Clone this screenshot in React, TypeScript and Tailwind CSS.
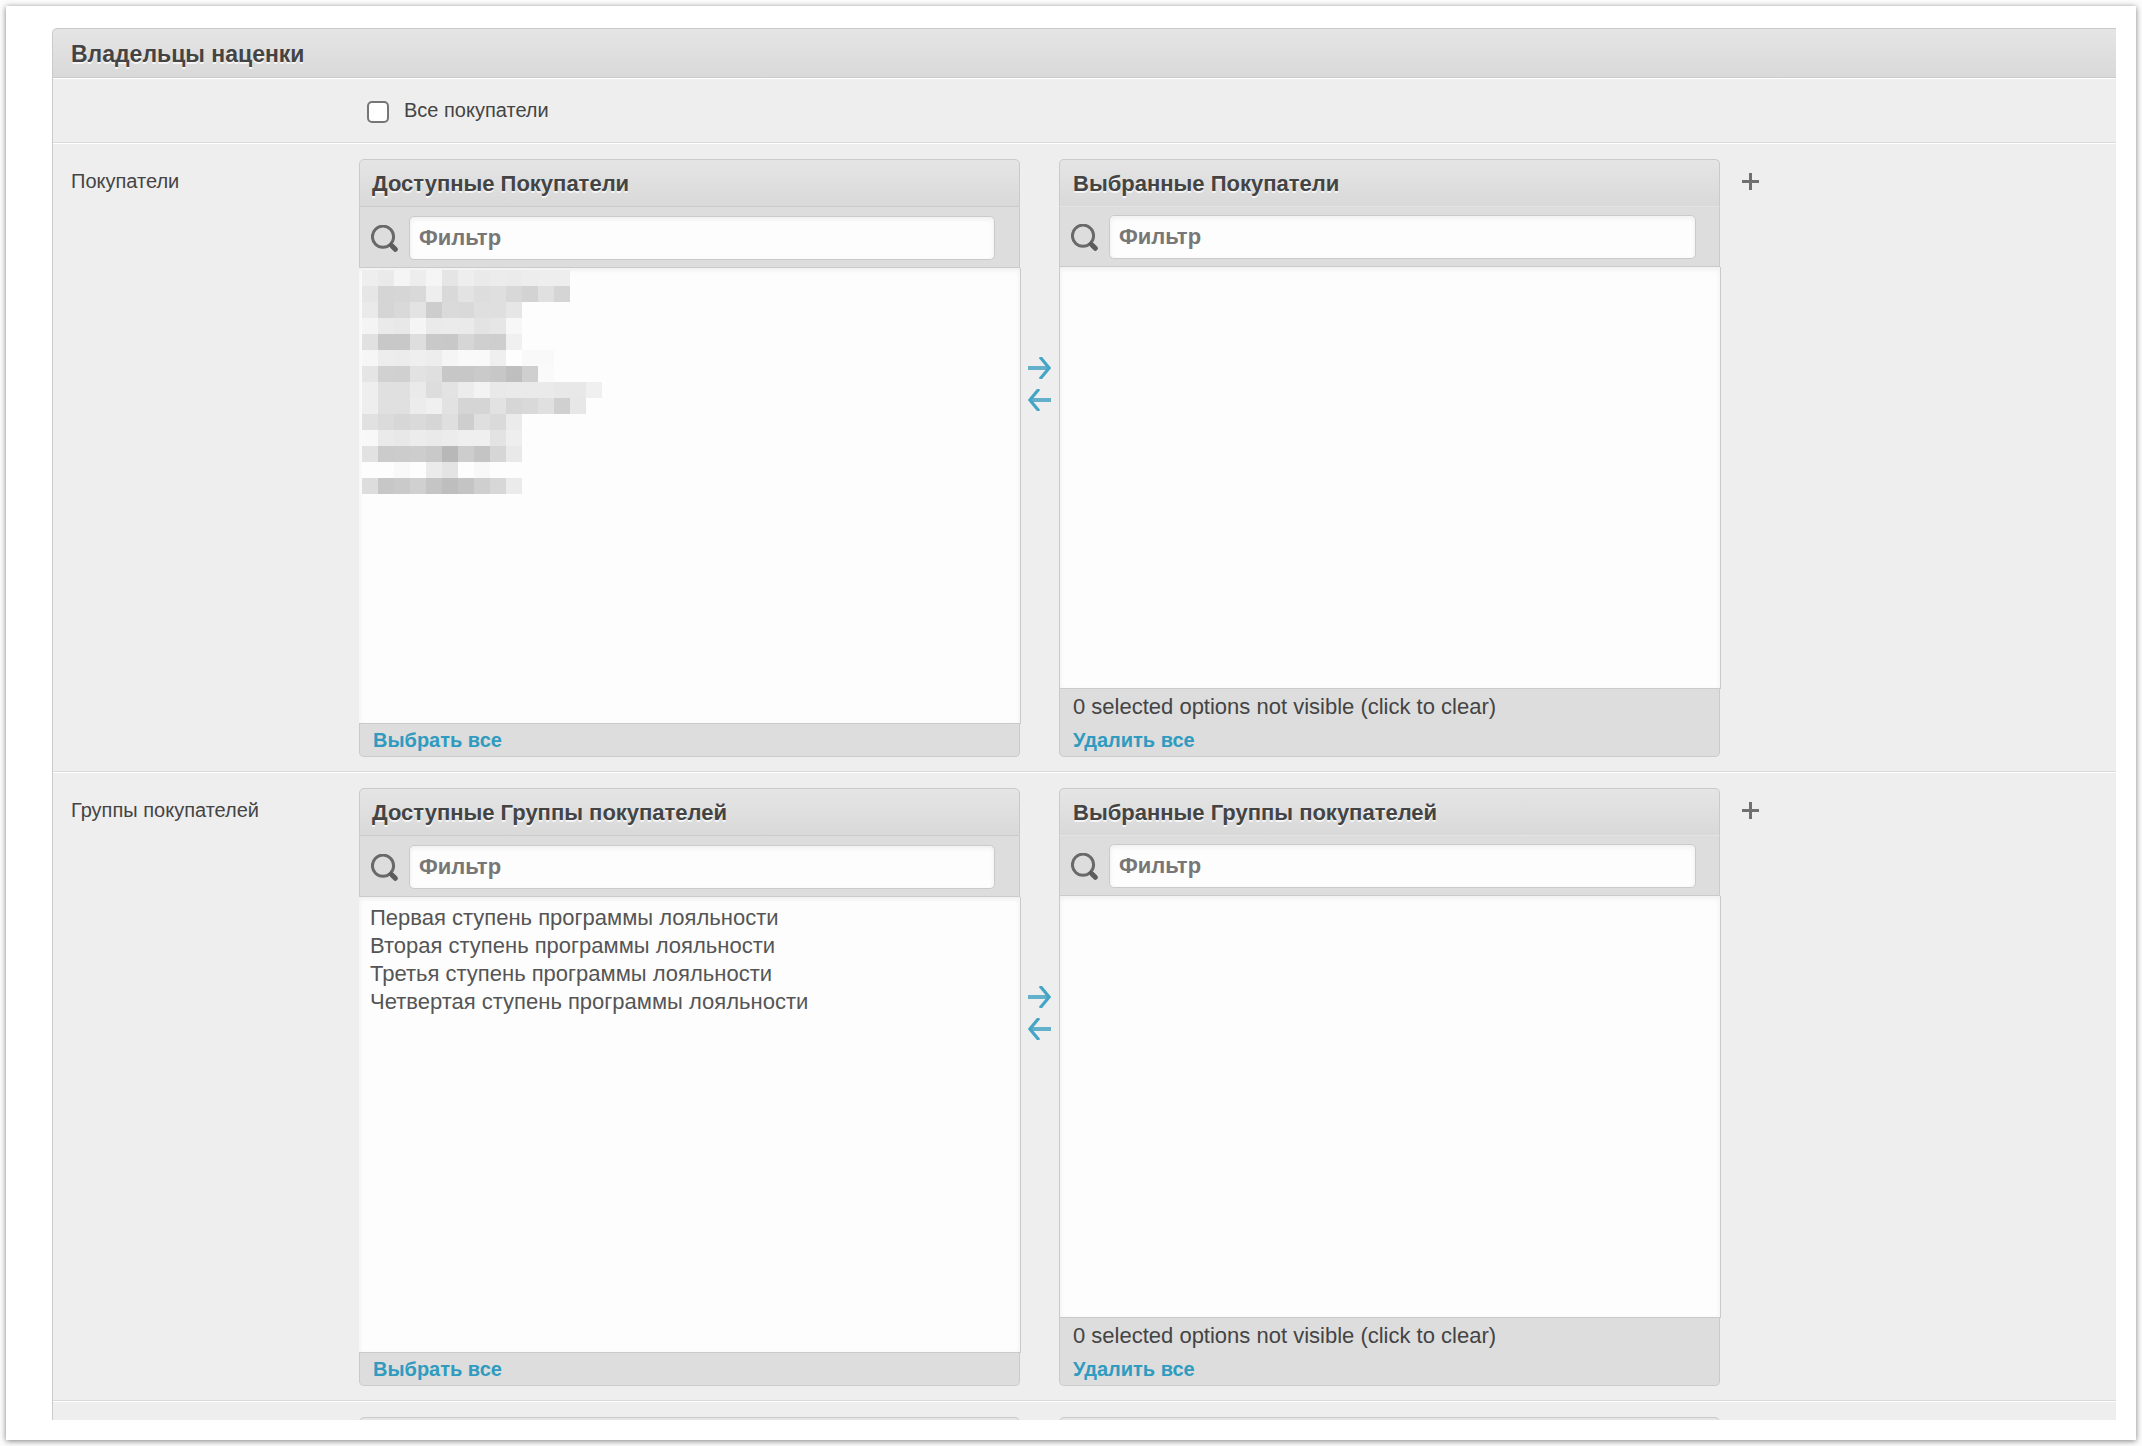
import { useState } from 'react'

const mosaic = [
  'ee ea f5 ed f5 e5 ee ea ec eb ed ee ee',
  'e6 d5 d6 d9 ee d9 e3 dd df d8 d3 e0 d5',
  'ea d5 d9 e3 cd da d9 df df e6',
  'f4 ea e8 f5 ea eb ea e3 e6 f7',
  'e1 c8 c8 de c9 c8 d6 cf ce f0',
  'f6 ed ec ef ed f5 f9 f9 ef fe f9 f9',
  'e5 d1 d0 e2 df c7 c7 ca c7 bf cf fa',
  'ee e0 e0 ea dd e3 ec f3 e9 ea ea ea e8 e8 f0',
  'ee e0 e0 ec f0 e2 d5 d5 e2 d6 d9 e0 d0 e7',
  'e1 db d7 da d6 df ce df da eb',
  'f8 ea e8 ec ea ec ef ef e3 ee',
  'e2 cb cc cd c9 b8 cd c4 d6 e9',
  'fd fd f9 fd eb e4 fd f8 fd fd',
  'dd c7 ca d0 c5 be c4 cf d7 eb',
]

const groups = [
  'Первая ступень программы лояльности',
  'Вторая ступень программы лояльности',
  'Третья ступень программы лояльности',
  'Четвертая ступень программы лояльности',
]

function SearchIcon() {
  return (
    <svg className="size-[27px] shrink-0" viewBox="0 0 27 27" fill="none" stroke="#5c5c5c">
      <circle cx="12" cy="11.7" r="10.6" strokeWidth="3" strokeOpacity="0.9" />
      <path d="M18.5 18.5 L22 22" strokeWidth="4" />
      <path d="M21.5 21.5 L24.3 24.3" strokeWidth="5" strokeLinecap="round" />
    </svg>
  )
}

function ArrowIcon({ left }: { left?: boolean }) {
  return (
    <svg className="h-[22px] w-[23px]" viewBox="0 0 23 22" fill="none" stroke="#45a5c4">
      <path d={left ? 'M2 11 H23' : 'M0 11 H21'} strokeWidth="4" stroke="#62b0ca" />
      <path d={left ? 'M11 0 L1.8 11 L11 22' : 'M12 0 L21.2 11 L12 22'} strokeWidth="3.2" />
    </svg>
  )
}

function PlusIcon() {
  return (
    <svg className="size-[17px]" viewBox="0 0 17 17" stroke="#707070" strokeWidth="3">
      <path d="M8.5 0 V17 M0 8.5 H17" />
    </svg>
  )
}

// blurred customer names
function Mosaic() {
  return (
    <svg className="pointer-events-none absolute top-[2px] left-[3px] h-56 w-60" viewBox="0 0 240 224" shapeRendering="crispEdges">
      {mosaic.map((row, y) =>
        row.split(' ').map((c, x) => (
          <rect key={`${x}-${y}`} x={x * 16} y={y * 16} width="16" height="16" fill={`#${c}${c}${c}`} />
        ))
      )}
    </svg>
  )
}

type BoxProps = { id: string; title: string; options?: string[]; chosen?: boolean; hidden?: boolean }

function SelectorBox({ id, title, options = [], chosen, hidden }: BoxProps) {
  const [filter, setFilter] = useState('')
  const shown = options.filter((o) => o.toLowerCase().includes(filter.toLowerCase()))

  return (
    <div className="min-w-0 max-w-[661px] flex-1">
      <h3 className={`rounded-t-[5px] border border-[#cacaca] bg-linear-to-b from-[#e5e5e5] to-[#d9d9d9] pt-[2px] text-[22px] leading-[44px] font-bold text-shadow-[0_2px_0_#f5f5f5] ${chosen ? 'border-b-[#e3e3e3] pl-[13px]' : 'pl-[12px]'}`}>
        {title}
      </h3>
      <div className={`flex items-center gap-[11px] border-x border-b border-[#cacaca] bg-[#ddd] pl-[11px] ${chosen ? 'pt-[8px] pr-[23px] pb-[7px]' : 'pt-[9px] pr-[24px] pb-[7px]'}`}>
        <SearchIcon />
        <input
          type="text"
          aria-label={`Фильтр: ${title}`}
          placeholder="Фильтр"
          value={filter}
          onChange={(e) => setFilter(e.target.value)}
          className="h-[44px] min-w-0 flex-1 rounded-[5px] border border-[#cacaca] bg-[#fdfdfd] px-[9px] text-[22px] font-bold shadow-[inset_0_2px_5px_#eee] outline-none placeholder:text-[#777]"
        />
      </div>
      <div className="relative -mr-px">
        <select
          multiple
          id={id}
          aria-label={title}
          className={`block w-full appearance-none border-r border-b border-[#cacaca] bg-[#fdfdfd] px-[9px] pt-[8px] text-[22px] text-[#555] shadow-[inset_0_2px_5px_#eee] outline-none ${chosen ? 'h-[422px] border-l' : 'h-[456px]'}`}
        >
          {shown.map((o) => (
            <option key={o} className="h-7 px-[2px] leading-7">{o}</option>
          ))}
        </select>
        {hidden && <Mosaic />}
      </div>
      <div className="flex flex-col items-start rounded-b-[5px] border-x border-b border-[#cacaca] bg-[#ddd] pl-[13px]">
        {chosen && <button type="button" className="h-[35px] text-[22px] leading-[35px]">0 selected options not visible (click to clear)</button>}
        <a href="#" className="text-[20px] leading-[32px] font-bold text-[#309bbf]">
          {chosen ? 'Удалить все' : 'Выбрать все'}
        </a>
      </div>
    </div>
  )
}

type RowProps = { id: string; label: string; name: string; options?: string[]; hidden?: boolean }

function SelectorRow({ id, label, name, options, hidden }: RowProps) {
  return (
    <div className="flex border-t border-b border-t-white border-b-[#d9d9d9] pt-[15px] pb-[14px] pl-[18px]">
      <label htmlFor={id} className="w-72 shrink-0 pt-[10px] text-[20px] leading-6">{label}</label>
      <div className="flex min-w-0 flex-1">
        <SelectorBox id={id} title={`Доступные ${name}`} options={options} hidden={hidden} />
        <div className="flex w-[39px] shrink-0 flex-col items-center gap-[10px] pt-[198px]">
          <button type="button" aria-label="Выбрать"><ArrowIcon /></button>
          <button type="button" aria-label="Удалить"><ArrowIcon left /></button>
        </div>
        <SelectorBox id={`${id}-chosen`} title={`Выбранные ${name}`} chosen />
        <div className="w-[62px] shrink-0 pt-[14px] pl-[22px]">
          <button type="button" aria-label="Добавить" className="block"><PlusIcon /></button>
        </div>
      </div>
    </div>
  )
}

export default function App() {
  return (
    <div className="bg-[#fdfdfd] p-[6px] font-['Liberation_Sans',Arial,sans-serif] text-[#444]">
      <main className="bg-white pt-[22px] pr-5 pb-5 pl-[46px] shadow-[0_1px_6px_rgba(0,0,0,0.5)]">
        <section className="overflow-hidden rounded-tl-[5px] border-l border-[#cacaca] bg-[#eee]">
          <h2 className="rounded-tl-[5px] border-t border-b border-[#cacaca] bg-linear-to-b from-[#e5e5e5] to-[#d9d9d9] pt-[2px] pl-[18px] text-[23px] leading-[46px] font-bold text-shadow-[0_2px_0_#f5f5f5]">
            Владельцы наценки
          </h2>
          <div className="flex h-[65px] border-t border-b border-t-white border-b-[#d9d9d9] pt-[19px] pl-[314px]">
            <label className="flex items-start gap-[15px] text-[20px] leading-6">
              <input type="checkbox" className="mt-[3px] size-[22px] appearance-none rounded-[5px] border-2 border-[#767676] bg-white checked:bg-[#309bbf]" />
              Все покупатели
            </label>
          </div>
          <SelectorRow id="customers" label="Покупатели" name="Покупатели" hidden />
          <SelectorRow id="groups" label="Группы покупателей" name="Группы покупателей" options={groups} />
          <div className="flex h-[19px] border-t border-white pt-[15px] pl-[306px]">
            <div className="h-4 max-w-[661px] flex-1 rounded-t-[5px] border border-[#cacaca] bg-[#e5e5e5]" />
            <div className="w-[39px]" />
            <div className="h-4 max-w-[661px] flex-1 rounded-t-[5px] border border-[#cacaca] bg-[#e5e5e5]" />
            <div className="w-[62px]" />
          </div>
        </section>
      </main>
    </div>
  )
}
